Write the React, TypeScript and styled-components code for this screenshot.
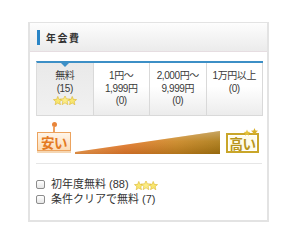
import React from 'react'
import styled, { createGlobalStyle } from 'styled-components'

const GlobalStyle = createGlobalStyle`
    body {
        margin: 0;
        background: #fff;
        font-family: "Liberation Sans", "Noto Sans CJK JP", sans-serif;
        color: #333;
    }
`

const Panel = styled.div`
    box-sizing: border-box;
    margin: 22px 0 0 28px;
    width: 241px;
    border: 2px solid #e3e3e3;
    border-top-width: 1px;
    background: #fff;
`

const Header = styled.div`
    display: flex;
    align-items: center;
    height: 28px;
    padding-left: 7px;
    background: linear-gradient(#fdfdfd, #ebebeb);
    border-bottom: 1px solid #e6dde1;
`

const HeaderBar = styled.span`
    width: 3px;
    height: 15px;
    background: #2a85c6;
    margin-right: 6px;
`

const Title = styled.h2`
    margin: 0;
    font-size: 10px;
    font-weight: bold;
    letter-spacing: 1.5px;
    color: #333;
`

const Body = styled.div`
    padding: 9px 5px 13px 6px;
`

const Tabs = styled.div`
    display: grid;
    grid-template-columns: repeat(4, 1fr);
    width: 226px;
    border-top: 2px solid #3c8fc6;
    border-left: 1px solid #dcdcdc;
`

const Tab = styled.div<{ $active?: boolean }>`
    position: relative;
    box-sizing: border-box;
    height: 53px;
    padding-top: 7px;
    border-right: 1px solid #d9d9d9;
    border-bottom: 1px solid #d9d9d9;
    background: ${p => p.$active ? 'linear-gradient(#e9e9e9, #f1f1f1)' : 'linear-gradient(#fff 45%, #ececec)'};
    text-align: center;
    font-size: 10px;
    line-height: 12.5px;
    letter-spacing: -0.4px;
    color: #3a3a3a;
`

const Pointer = styled.span`
    position: absolute;
    top: 0;
    left: 50%;
    margin-left: -4px;
    border-left: 4px solid transparent;
    border-right: 4px solid transparent;
    border-top: 4px solid #3c8fc6;
`

const SliderRow = styled.div`
    display: flex;
    align-items: flex-end;
    box-sizing: border-box;
    height: 48px;
    padding: 0 0 9px 1px;
    border-bottom: 1px solid #e6e6e6;
`

const LowMarker = styled.div`
    display: flex;
    flex-direction: column;
    align-items: center;
    margin-bottom: 3px;
`

const Pin = styled.span`
    width: 5px;
    height: 5px;
    border-radius: 50%;
    background: #e8853a;
`

const PinStem = styled.span`
    width: 2px;
    height: 5px;
    background: #eea160;
`

const PriceBox = styled.div<{ $tone: 'low' | 'high' }>`
    position: relative;
    box-sizing: border-box;
    display: flex;
    align-items: center;
    justify-content: center;
    width: ${p => p.$tone === 'low' ? '34px' : '33px'};
    height: ${p => p.$tone === 'low' ? '19px' : '20px'};
    font-size: 13.5px;
    font-weight: bold;
    letter-spacing: -0.5px;
    color: ${p => p.$tone === 'low' ? '#e47a22' : '#b8951c'};
    border: ${p => p.$tone === 'low' ? '1px solid #eca35e' : '2px solid #c9a62a'};
    background: ${p => p.$tone === 'low' ? 'linear-gradient(#fff5e9, #fcdcb6)' : '#fffcea'};
    box-shadow: ${p => p.$tone === 'low' ? '0 2px 0 #f5d6b2' : 'inset 0 0 0 1px #fff'};
`

const Wedge = styled.svg`
    display: block;
    margin-left: 4px;
`

const HighMarker = styled.div`
    margin: 0 0 1px 6px;
`

const Sparkle = styled.svg`
    position: absolute;
    top: -7px;
    right: -2px;
`

const Options = styled.div`
    padding-top: 13px;
`

const Option = styled.label`
    display: flex;
    align-items: center;
    font-size: 11px;
    line-height: 15px;
    color: #333;
`

const Box = styled.span`
    box-sizing: border-box;
    width: 9px;
    height: 9px;
    margin-right: 6px;
    border: 1px solid #8c8c8c;
    border-radius: 2px;
    background: linear-gradient(#fff, #e6e6e6);
`

const StarIcon = styled.svg`
    display: block;
    margin-top: 1px;
`

const StarRow = styled.span<{ $gap?: number }>`
    display: inline-flex;
    margin-left: ${p => p.$gap ?? 3}px;
`

const star = (cx: number, cy: number, r: number) => {
    const pts: string[] = []
    for (let i = 0; i < 10; i++) {
        const rad = i % 2 === 0 ? r : r * 0.45
        const a = -Math.PI / 2 + i * Math.PI / 5
        pts.push(`${(cx + rad * Math.cos(a)).toFixed(2)},${(cy + rad * Math.sin(a)).toFixed(2)}`)
    }
    return pts.join(' ')
}

const Stars = ({ width = 24 }: { width?: number }) => (
    <StarIcon width={width} height={9} viewBox="0 0 24 9">
        <polygon points={star(4.8, 5, 4.6)} fill="#f8e670" stroke="#d7ac1a" strokeWidth={0.5} />
        <polygon points={star(19.2, 5, 4.6)} fill="#f8e670" stroke="#d7ac1a" strokeWidth={0.5} />
        <polygon points={star(12, 4.6, 5)} fill="#fbec86" stroke="#d7ac1a" strokeWidth={0.5} />
    </StarIcon>
)

const tabs = [
    { lines: ['無料', '(15)'], stars: true, active: true },
    { lines: ['1円～', '1,999円', '(0)'] },
    { lines: ['2,000円～', '9,999円', '(0)'] },
    { lines: ['1万円以上', '(0)'] },
]

const App = () => (
    <>
        <GlobalStyle />
        <Panel>
            <Header>
                <HeaderBar />
                <Title>年会費</Title>
            </Header>
            <Body>
                <Tabs>
                    {tabs.map((t, i) => (
                        <Tab key={i} $active={t.active}>
                            {t.active && <Pointer />}
                            {t.lines.map(l => <div key={l}>{l}</div>)}
                            {t.stars && <StarRow $gap={0}><Stars /></StarRow>}
                        </Tab>
                    ))}
                </Tabs>
                <SliderRow>
                    <LowMarker>
                        <Pin />
                        <PinStem />
                        <PriceBox $tone="low">安い</PriceBox>
                    </LowMarker>
                    <Wedge width={145} height={23} viewBox="0 0 145 23">
                        <defs>
                            <linearGradient id="wedgeFill" x1="0" y1="0" x2="1" y2="0">
                                <stop offset="0" stopColor="#f39a4a" />
                                <stop offset="0.35" stopColor="#e57a2a" />
                                <stop offset="0.7" stopColor="#c9841e" />
                                <stop offset="1" stopColor="#a9760f" />
                            </linearGradient>
                            <linearGradient id="wedgeShine" x1="0" y1="0" x2="0" y2="1">
                                <stop offset="0" stopColor="#fff" stopOpacity="0.35" />
                                <stop offset="0.45" stopColor="#fff" stopOpacity="0.1" />
                                <stop offset="1" stopColor="#000" stopOpacity="0.12" />
                            </linearGradient>
                        </defs>
                        <polygon points="0,21 145,0 145,23 0,23" fill="url(#wedgeFill)" />
                        <polygon points="0,21 145,0 145,23 0,23" fill="url(#wedgeShine)" />
                    </Wedge>
                    <HighMarker>
                        <PriceBox $tone="high">
                            高い
                            <Sparkle width={16} height={9} viewBox="0 0 16 9">
                                <polygon points={star(4, 5, 3.5)} fill="#e5c23a" />
                                <polygon points={star(11.5, 3.8, 3.8)} fill="#d9b12a" />
                            </Sparkle>
                        </PriceBox>
                    </HighMarker>
                </SliderRow>
                <Options>
                    <Option>
                        <Box />
                        初年度無料 (88)
                        <StarRow><Stars width={28} /></StarRow>
                    </Option>
                    <Option>
                        <Box />
                        条件クリアで無料 (7)
                    </Option>
                </Options>
            </Body>
        </Panel>
    </>
)

export default App
